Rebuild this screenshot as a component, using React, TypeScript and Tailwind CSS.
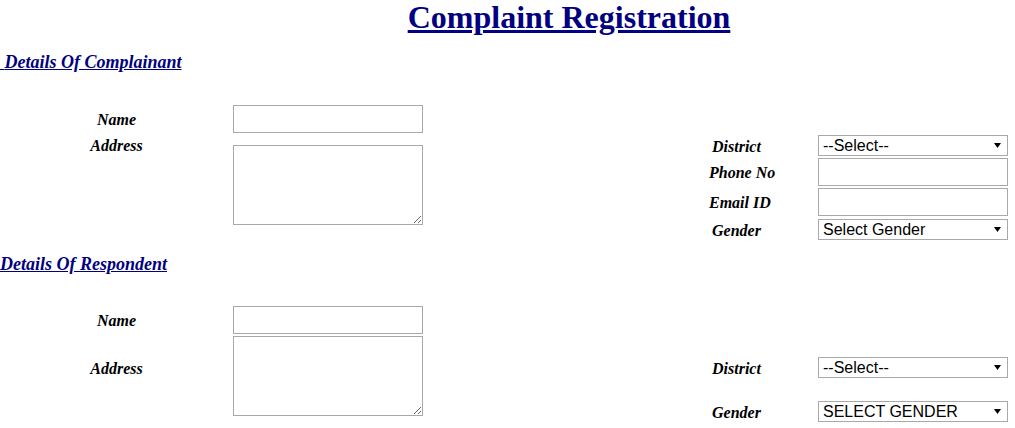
import type { ReactNode } from 'react';

const label = 'font-bold italic text-[16px] leading-[20px] text-black translate-y-[1px]';
const heading = 'font-bold italic text-[18px] leading-[20px] text-[#000080] underline';

function TextBox() {
  return <input type="text" className="block h-[28px] w-[190px] border border-[#a9a9a9] bg-white px-[2px] text-[16px] outline-none" />;
}

function TextArea() {
  return <textarea className="block h-[80px] w-[190px] border border-[#a9a9a9] bg-white p-[2px] text-[14px] outline-none" />;
}

function Dropdown({ options }: { options: string[] }) {
  return (
    <div className="relative h-[21px] w-[190px]">
      <select className="block h-full w-full appearance-none rounded-none border border-[#a9a9a9] bg-white py-0 pl-[4px] pr-[20px] font-['Liberation_Sans',Arial,sans-serif] text-[16px] leading-[19px] text-black outline-none">
        {options.map((o) => (
          <option key={o}>{o}</option>
        ))}
      </select>
      <svg className="pointer-events-none absolute right-[7px] top-[8px]" width="7" height="5" viewBox="0 0 7 5">
        <path d="M0 0h7L3.5 5z" fill="#000" />
      </svg>
    </div>
  );
}

function RightRow({ name, pad, children, className = '' }: { name: string; pad?: boolean; children: ReactNode; className?: string }) {
  return (
    <div className={`flex items-center ${className}`}>
      <span className={`w-[109px] ${pad ? 'pl-[3px]' : ''} ${label}`}>{name}</span>
      {children}
    </div>
  );
}

export default function App() {
  return (
    <div className="h-[428px] w-[1015px] overflow-hidden bg-white font-['Liberation_Serif','Times_New_Roman',serif] text-black">
      <h1 className="pl-[123px] text-center text-[32px] font-bold leading-[34px] text-[#000080] underline">Complaint Registration</h1>

      <h2 className={`mt-[18px] ${heading}`}>{'\u00a0'}Details Of Complainant</h2>
      <div className="mt-[33px] flex">
        <div className="w-[423px]">
          <div className="flex items-center">
            <span className={`w-[233px] text-center ${label}`}>Name</span>
            <TextBox />
          </div>
          <div className="mt-[12px] flex items-start">
            <span className={`-mt-[10px] w-[233px] text-center ${label}`}>Address</span>
            <TextArea />
          </div>
        </div>
        <div className="ml-[286px] mt-[30px]">
          <RightRow name="District" pad>
            <Dropdown options={['--Select--']} />
          </RightRow>
          <RightRow name="Phone No" className="mt-[2px]">
            <TextBox />
          </RightRow>
          <RightRow name="Email ID" className="mt-[2px]">
            <TextBox />
          </RightRow>
          <RightRow name="Gender" pad className="mt-[3px]">
            <Dropdown options={['Select Gender', 'Male', 'Female']} />
          </RightRow>
        </div>
      </div>

      <h2 className={`mt-[14px] ${heading}`}>Details Of Respondent</h2>
      <div className="mt-[32px] flex">
        <div className="w-[423px]">
          <div className="flex items-center">
            <span className={`w-[233px] text-center ${label}`}>Name</span>
            <TextBox />
          </div>
          <div className="mt-[2px] flex items-start">
            <span className={`mt-[22px] w-[233px] text-center ${label}`}>Address</span>
            <TextArea />
          </div>
        </div>
        <div className="ml-[286px] mt-[51px]">
          <RightRow name="District" pad>
            <Dropdown options={['--Select--']} />
          </RightRow>
          <RightRow name="Gender" pad className="mt-[23px]">
            <Dropdown options={['SELECT GENDER', 'MALE', 'FEMALE']} />
          </RightRow>
        </div>
      </div>
    </div>
  );
}
